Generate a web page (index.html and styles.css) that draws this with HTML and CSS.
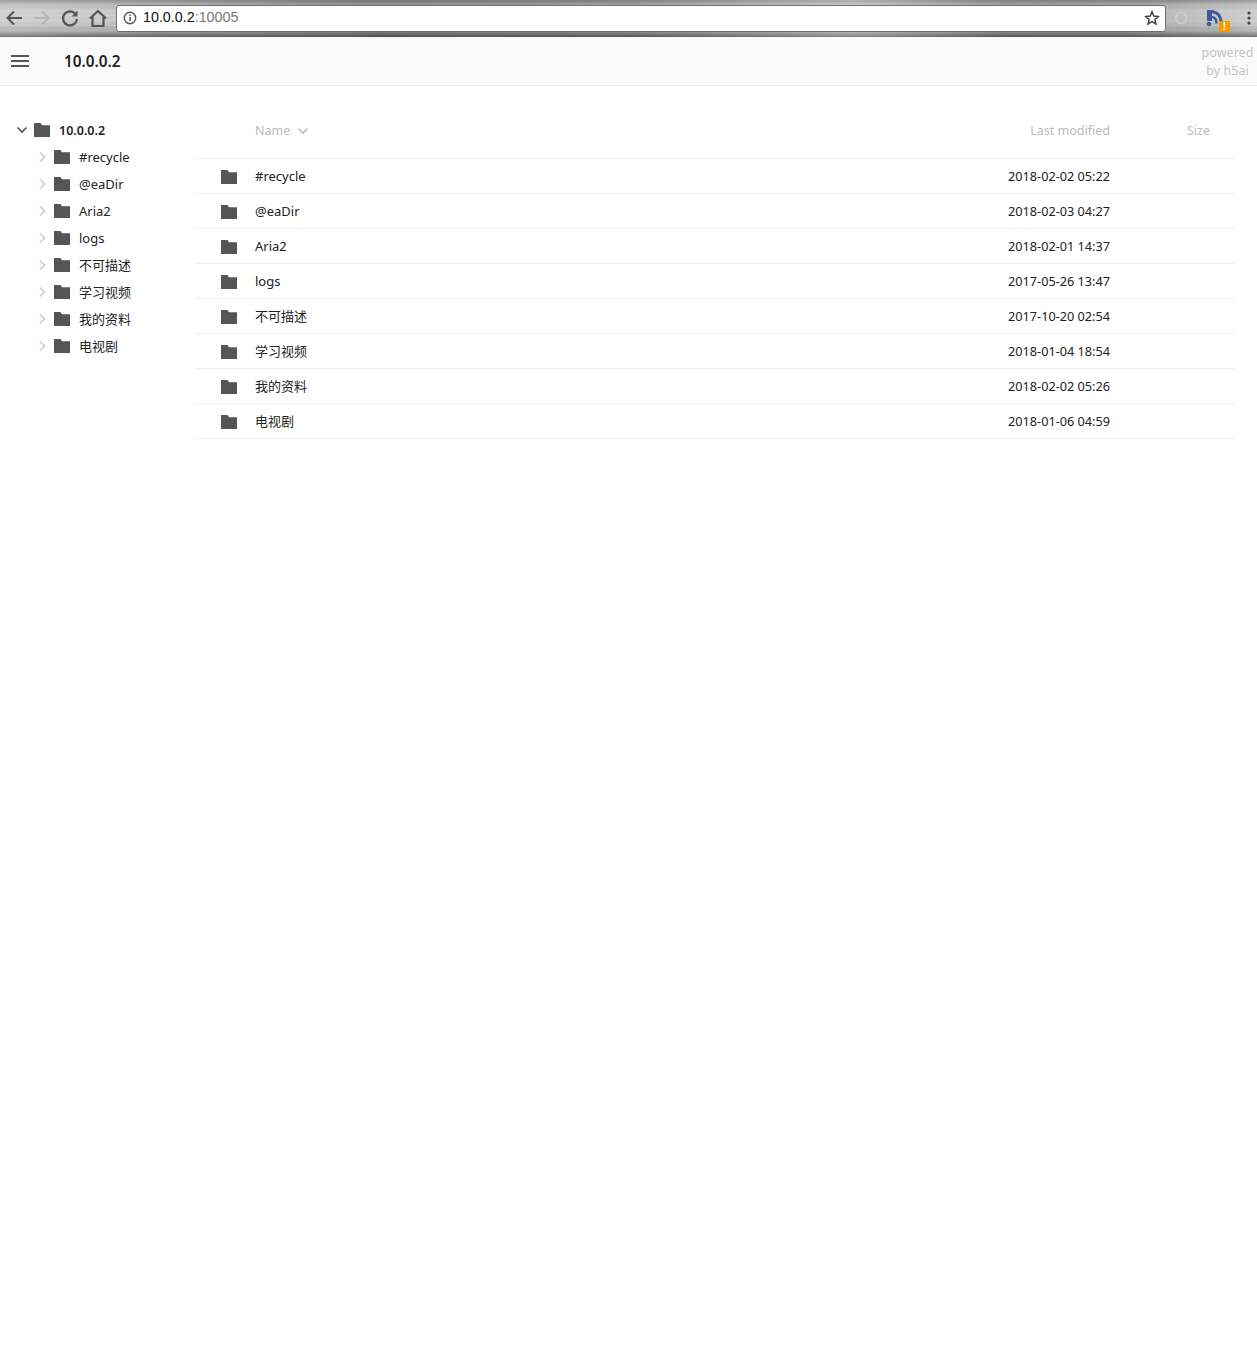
FILE: index.html
```html
<!DOCTYPE html>
<html lang="en">
<head>
<meta charset="utf-8">
<title>10.0.0.2</title>
<link rel="stylesheet" href="styles.css">
</head>
<body>
<svg class="defs" width="0" height="0" aria-hidden="true"><defs>
<symbol id="folder" viewBox="0 0 16 14"><path d="M0 0h6.500l1.500 2.200h8V14H0z" fill="#555"/></symbol>
</defs></svg>
<header class="chrome">
  <div class="nav">
    <svg class="ic" width="22" height="22" viewBox="0 0 22 22"><path d="M19 11H5M11 4.500l-6.500 6.500 6.500 6.500" fill="none" stroke="#555" stroke-width="2"/></svg>
    <svg class="ic" width="22" height="22" viewBox="0 0 22 22"><path d="M3 11h14M11 4.500l6.500 6.500-6.500 6.500" fill="none" stroke="#b8b8b8" stroke-width="2"/></svg>
    <svg class="ic" width="22" height="22" viewBox="0 0 22 22"><path d="M16.500 7A7 7 0 1 0 18 12" fill="none" stroke="#555" stroke-width="2.200"/><path d="M18.500 3.500v6h-6z" fill="#555"/></svg>
    <svg class="ic" width="22" height="22" viewBox="0 0 22 22"><path d="M3 11.500 11 4l8 7.500M5.500 10v9h11v-9" fill="none" stroke="#555" stroke-width="2.200"/></svg>
  </div>
  <div class="omnibox">
    <svg width="14" height="14" viewBox="0 0 14 14"><circle cx="7" cy="7" r="5.700" fill="none" stroke="#555" stroke-width="1.400"/><path d="M7 6v4.200M7 3.600v1.400" stroke="#555" stroke-width="1.500"/></svg>
    <span class="url">10.0.0.2<span class="port">:10005</span></span>
    <svg class="star" width="16" height="16" viewBox="0 0 16 16"><path d="m8 1.800 1.800 4.300 4.600.4-3.500 3 1.100 4.500L8 11.600 4 14l1.100-4.500-3.500-3 4.600-.4z" fill="none" stroke="#444" stroke-width="1.500"/></svg>
  </div>
  <div class="ext">
    <svg class="ghost" width="16" height="16" viewBox="0 0 16 16"><circle cx="8" cy="8" r="5.500" fill="none" stroke="#d6d6d6" stroke-width="2"/></svg>
    <span class="ext-icon">
      <svg width="17" height="17" viewBox="0 0 17 17"><path d="M1 0h5v11H1z" fill="#3c5a9c"/><path d="M5 1.500c6 0 10 4.500 10 11" fill="none" stroke="#3c5a9c" stroke-width="2.800"/><path d="M5 7c3.500 0 5.500 2.500 5.500 6.500" fill="none" stroke="#3c5a9c" stroke-width="2.400"/><circle cx="3" cy="14" r="2.300" fill="#3c5a9c"/></svg>
      <span class="badge">!</span>
    </span>
    <svg width="4" height="14" viewBox="0 0 4 14"><circle cx="2" cy="2" r="1.600" fill="#444"/><circle cx="2" cy="7" r="1.600" fill="#444"/><circle cx="2" cy="12" r="1.600" fill="#444"/></svg>
  </div>
</header>
<div class="topbar">
  <div class="crumb">
    <svg width="18" height="12" viewBox="0 0 18 12"><path d="M0 1h18M0 6h18M0 11h18" stroke="#555" stroke-width="2"/></svg>
    <span class="title">10.0.0.2</span>
  </div>
  <div class="powered">powered<br>by h5ai</div>
</div>
<main class="content">
  <nav class="tree">
    <div class="tree-row root">
      <svg class="chev" width="12" height="12" viewBox="0 0 12 12"><path d="M1.500 3.500 6 8l4.500-4.500" fill="none" stroke="#555" stroke-width="1.600"/></svg>
      <svg class="fold" width="16" height="14"><use href="#folder"/></svg>
      <span class="root-label">10.0.0.2</span>
    </div>
    <div class="tree-row sub"><svg class="chev" width="8" height="12" viewBox="0 0 8 12"><path d="m2 1.500 4.500 4.500L2 10.500" fill="none" stroke="#ccc" stroke-width="1.600"/></svg><svg class="fold" width="16" height="14"><use href="#folder"/></svg><span>#recycle</span></div>
    <div class="tree-row sub"><svg class="chev" width="8" height="12" viewBox="0 0 8 12"><path d="m2 1.500 4.500 4.500L2 10.500" fill="none" stroke="#ccc" stroke-width="1.600"/></svg><svg class="fold" width="16" height="14"><use href="#folder"/></svg><span>@eaDir</span></div>
    <div class="tree-row sub"><svg class="chev" width="8" height="12" viewBox="0 0 8 12"><path d="m2 1.500 4.500 4.500L2 10.500" fill="none" stroke="#ccc" stroke-width="1.600"/></svg><svg class="fold" width="16" height="14"><use href="#folder"/></svg><span>Aria2</span></div>
    <div class="tree-row sub"><svg class="chev" width="8" height="12" viewBox="0 0 8 12"><path d="m2 1.500 4.500 4.500L2 10.500" fill="none" stroke="#ccc" stroke-width="1.600"/></svg><svg class="fold" width="16" height="14"><use href="#folder"/></svg><span>logs</span></div>
    <div class="tree-row sub"><svg class="chev" width="8" height="12" viewBox="0 0 8 12"><path d="m2 1.500 4.500 4.500L2 10.500" fill="none" stroke="#ccc" stroke-width="1.600"/></svg><svg class="fold" width="16" height="14"><use href="#folder"/></svg><span class="cjk">不可描述</span></div>
    <div class="tree-row sub"><svg class="chev" width="8" height="12" viewBox="0 0 8 12"><path d="m2 1.500 4.500 4.500L2 10.500" fill="none" stroke="#ccc" stroke-width="1.600"/></svg><svg class="fold" width="16" height="14"><use href="#folder"/></svg><span class="cjk">学习视频</span></div>
    <div class="tree-row sub"><svg class="chev" width="8" height="12" viewBox="0 0 8 12"><path d="m2 1.500 4.500 4.500L2 10.500" fill="none" stroke="#ccc" stroke-width="1.600"/></svg><svg class="fold" width="16" height="14"><use href="#folder"/></svg><span class="cjk">我的资料</span></div>
    <div class="tree-row sub"><svg class="chev" width="8" height="12" viewBox="0 0 8 12"><path d="m2 1.500 4.500 4.500L2 10.500" fill="none" stroke="#ccc" stroke-width="1.600"/></svg><svg class="fold" width="16" height="14"><use href="#folder"/></svg><span class="cjk">电视剧</span></div>
  </nav>
  <section class="listing">
    <div class="list-head">
      <span class="name">Name <svg class="sort" width="12" height="12" viewBox="0 0 12 12"><path d="M1.500 3.500 6 8l4.500-4.500" fill="none" stroke="#bbb" stroke-width="1.600"/></svg></span>
      <span class="date">Last modified</span>
      <span class="size">Size</span>
    </div>
    <div class="row"><svg class="fold" width="16" height="14"><use href="#folder"/></svg><span class="name">#recycle</span><span class="date">2018-02-02 05:22</span><span class="size"></span></div>
    <div class="row"><svg class="fold" width="16" height="14"><use href="#folder"/></svg><span class="name">@eaDir</span><span class="date">2018-02-03 04:27</span><span class="size"></span></div>
    <div class="row"><svg class="fold" width="16" height="14"><use href="#folder"/></svg><span class="name">Aria2</span><span class="date">2018-02-01 14:37</span><span class="size"></span></div>
    <div class="row"><svg class="fold" width="16" height="14"><use href="#folder"/></svg><span class="name">logs</span><span class="date">2017-05-26 13:47</span><span class="size"></span></div>
    <div class="row"><svg class="fold" width="16" height="14"><use href="#folder"/></svg><span class="name cjk">不可描述</span><span class="date">2017-10-20 02:54</span><span class="size"></span></div>
    <div class="row"><svg class="fold" width="16" height="14"><use href="#folder"/></svg><span class="name cjk">学习视频</span><span class="date">2018-01-04 18:54</span><span class="size"></span></div>
    <div class="row"><svg class="fold" width="16" height="14"><use href="#folder"/></svg><span class="name cjk">我的资料</span><span class="date">2018-02-02 05:26</span><span class="size"></span></div>
    <div class="row"><svg class="fold" width="16" height="14"><use href="#folder"/></svg><span class="name cjk">电视剧</span><span class="date">2018-01-06 04:59</span><span class="size"></span></div>
  </section>
</main>
</body>
</html>
```
FILE: styles.css
```css
html, body { margin: 0; padding: 0; background: #fff; }
body { font-family: "Noto Sans", "Noto Sans CJK SC", sans-serif; font-size: 12.700px; color: #222; height: 1345px; overflow: hidden; }
.defs { position: absolute; }
svg { display: block; flex: none; }
.cjk { font-size: 13px; }
.row .cjk { margin-top: -2px; }

.chrome {
  height: 37px; box-sizing: border-box; display: flex; align-items: center;
  background:
    repeating-linear-gradient(180deg, rgba(255,255,255,.04) 0 1px, rgba(0,0,0,.02) 1px 5px),
    linear-gradient(90deg, rgba(255,255,255,.18) 0, rgba(255,255,255,.05) 8%, rgba(0,0,0,.2) 30%, rgba(0,0,0,.12) 50%, rgba(255,255,255,.25) 68%, rgba(0,0,0,.12) 80%, rgba(0,0,0,.1) 90%, rgba(255,255,255,.12) 100%),
    linear-gradient(180deg, #8a8a8a 0, #b5b5b5 10%, #cdcdcd 30%, #c9c9c9 60%, #a9a9a9 85%, #707070 96%, #5c5c5c 100%);
  padding: 0 0 1px 3px;
}
.nav { display: flex; gap: 6px; width: 113px; }
.omnibox {
  width: 1050px; height: 27px; box-sizing: border-box; background: #fff;
  border: 1px solid #6f6f6f; border-radius: 3px; display: flex; align-items: center;
  padding: 0 5px 0 6px; gap: 6px;
}
.url { font-family: "Liberation Sans", sans-serif; font-size: 14.300px; color: #111; flex: 1; position: relative; top: -1px; }
.port { color: #777; }
.ext { display: flex; align-items: center; margin-left: 7px; }
.ghost { opacity: .6; margin-right: 17px; }
.ext-icon { position: relative; display: block; margin-right: 24px; }
.badge {
  position: absolute; right: -7px; bottom: -5px; width: 11px; height: 11px;
  background: #f59d00; color: #fff; font: bold 10px/11px "Liberation Sans", sans-serif; text-align: center;
}

.topbar {
  height: 49px; box-sizing: border-box; background: #fafafa; border-bottom: 1px solid #eee;
  display: flex; justify-content: space-between; align-items: center;
}
.crumb { display: flex; align-items: center; padding-left: 11px; gap: 35px; }
.title { font-size: 15.300px; font-weight: 600; color: #222; }
.powered { width: 55px; margin-right: 2px; padding-top: 2px; text-align: center; color: #c4c4c4; font-size: 12.600px; line-height: 18px; }

.content { display: flex; padding-top: 27px; }
.tree { width: 195px; flex: none; padding-top: 4px; }
.tree-row { height: 27px; display: flex; align-items: center; line-height: 18px; }
.tree-row.root { height: 26px; padding-left: 16px; font-weight: 600; font-size: 12.500px; }
.tree-row.root .chev { margin-right: 6px; }
.tree-row.root .fold { margin-right: 9px; }
.root-label { padding-top: 2px; }
.tree-row.sub { padding-left: 38px; font-size: 13px; }
.tree-row.sub .chev { margin-right: 8px; }
.tree-row.sub .fold { margin-right: 9px; }

.listing { width: 1039px; flex: none; }
.list-head {
  height: 45px; display: flex; align-items: flex-start; color: #bbb; font-size: 12.500px;
  border-bottom: 1px solid #eee; padding-left: 60px;
}
.list-head .name { display: flex; align-items: center; gap: 7px; height: 27px; margin-top: 4px; flex: 1; font-size: 12.500px; }
.list-head .date, .list-head .size { margin-top: 4px; line-height: 27px; }
.date { width: 200px; text-align: right; padding-right: 24px; box-sizing: border-box; }
.size { width: 100px; text-align: right; padding-right: 24px; box-sizing: border-box; }
.row {
  height: 34px; border-bottom: 1px solid #eee; display: flex; align-items: center;
  padding-left: 26px;
}
.row .fold { margin-right: 18px; position: relative; top: 1px; }
.row .name { flex: 1; font-size: 13px; }
```
